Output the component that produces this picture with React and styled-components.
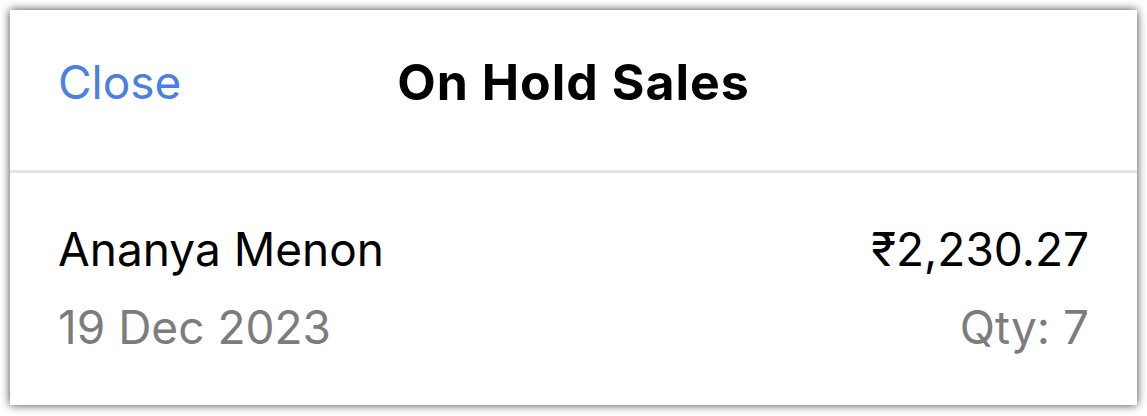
import styled, { createGlobalStyle } from 'styled-components'

const GlobalStyle = createGlobalStyle`
    body {
        margin: 0;
        background: #ffffff;
        font-family: Inter, "Liberation Sans", sans-serif;
    }
`

const Page = styled.div`
    padding: 10px;
`

const Sheet = styled.div`
    background: #ffffff;
    height: 395px;
    box-shadow: 0 0 9px rgba(0, 0, 0, 0.75);
    display: flex;
    flex-direction: column;
`

const Header = styled.div`
    height: 163px;
    box-sizing: border-box;
    padding: 0 48px 16px;
    display: grid;
    grid-template-columns: 1fr auto 1fr;
    align-items: center;
    border-bottom: 3px solid #e2e4eb;
`

const CloseButton = styled.span`
    color: #4a7fe4;
    font-size: 46px;
    cursor: pointer;
    justify-self: start;
`

const Title = styled.h1`
    margin: 0;
    font-size: 50px;
    font-weight: 650;
    letter-spacing: 1px;
    color: #000;
`

const Row = styled.div`
    padding: 48px 48px 0;
    display: flex;
    flex-direction: column;
    gap: 22px;
`

const Line = styled.div`
    display: flex;
    justify-content: space-between;
    align-items: baseline;
    font-size: 46px;
    color: ${p => (p.muted ? '#7c7c7c' : '#000')};
`

const App = () => {
    return (
        <Page>
            <GlobalStyle />
            <Sheet>
                <Header>
                    <CloseButton>Close</CloseButton>
                    <Title>On Hold Sales</Title>
                    <span />
                </Header>
                <Row>
                    <Line>
                        <span>Ananya Menon</span>
                        <span>₹2,230.27</span>
                    </Line>
                    <Line muted>
                        <span>19 Dec 2023</span>
                        <span>Qty: 7</span>
                    </Line>
                </Row>
            </Sheet>
        </Page>
    )
}

export default App
